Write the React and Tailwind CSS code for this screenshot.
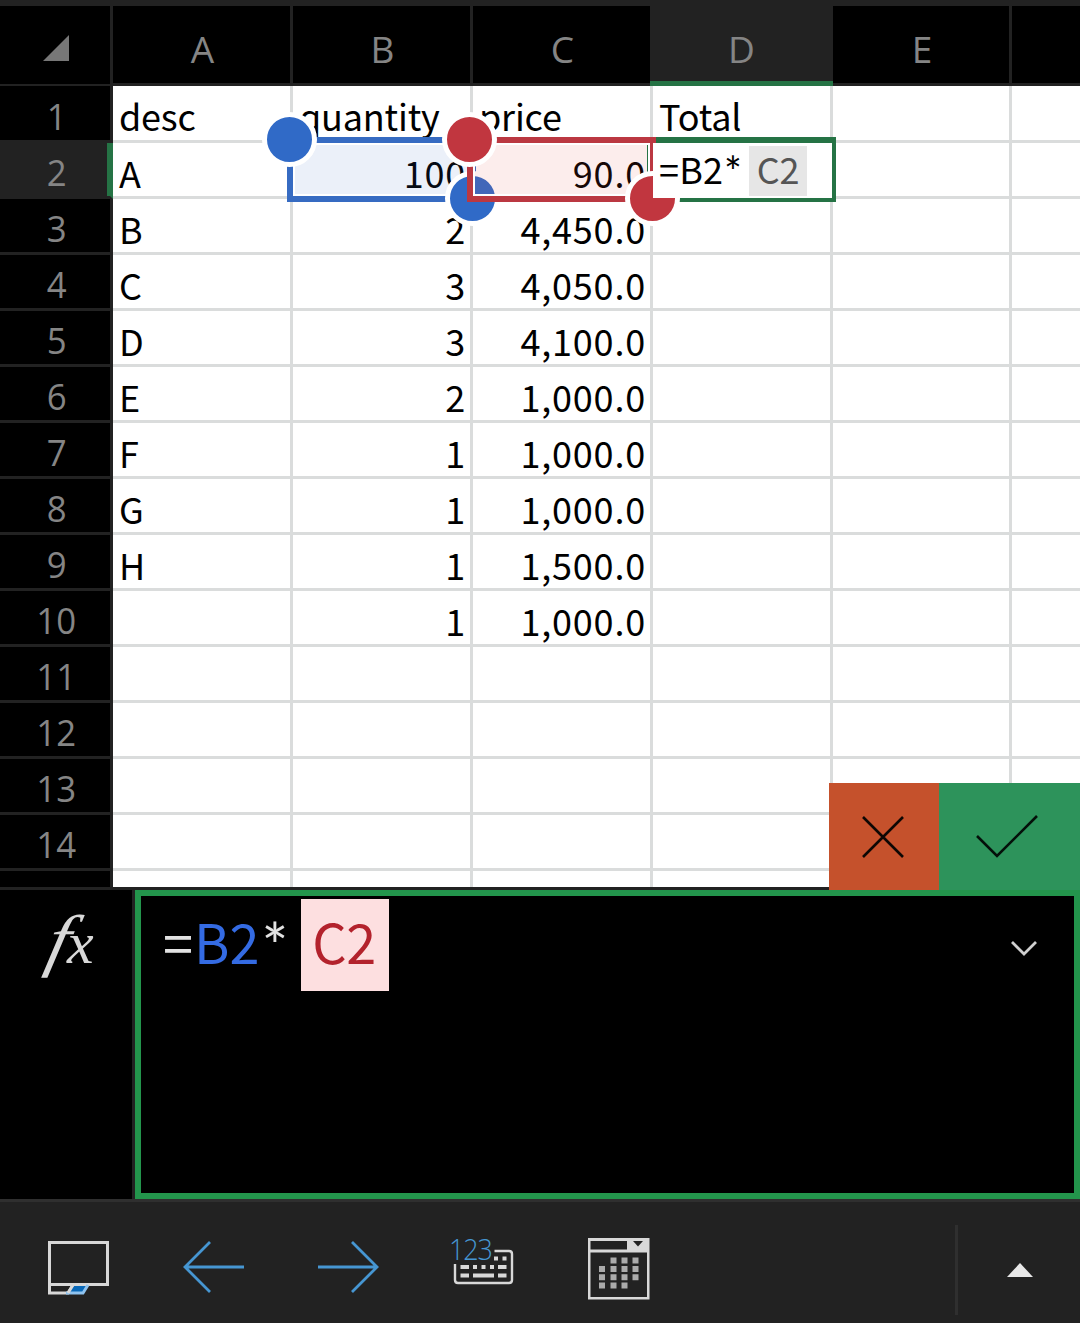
import React from "react";

const cellFont = "font-['Noto_Sans_CJK_SC',sans-serif]";
const uiFont = "font-['Open_Sans',sans-serif]";

const rows = [
  ["desc", "quantity", "price", "Total"],
  ["A", "100", "90.0", ""],
  ["B", "2", "4,450.0", ""],
  ["C", "3", "4,050.0", ""],
  ["D", "3", "4,100.0", ""],
  ["E", "2", "1,000.0", ""],
  ["F", "1", "1,000.0", ""],
  ["G", "1", "1,000.0", ""],
  ["H", "1", "1,500.0", ""],
  ["", "1", "1,000.0", ""],
  ["", "", "", ""],
  ["", "", "", ""],
  ["", "", "", ""],
  ["", "", "", ""],
];

const columns = "grid grid-cols-[113px_180px_180px_180px_180px_179px_71px]";

function ColumnHeader({ label, active }) {
  return (
    <div
      className={
        active
          ? "-ml-[3px] flex h-20 items-center justify-center border-b-[5px] border-[#257345] bg-[#222] pt-[9px]"
          : "flex h-20 items-center justify-center border-r-[3px] border-b-[3px] border-[#222] bg-black pt-[7px] pl-[2px]"
      }
    >
      <span className="inline-block text-[37px] leading-none text-[#858585]">{label}</span>
    </div>
  );
}

function RowHeader({ n, active }) {
  return (
    <div
      className={
        "flex items-center justify-center border-r-[3px] border-b-[3px] border-b-[#222] pt-[4px] pl-[3px] " +
        (active ? "border-r-[#257345] bg-[#222] shadow-[inset_-3px_0_0_#257345]" : "border-r-[#222] bg-black")
      }
    >
      <span className="inline-block scale-x-[0.94] text-[37px] leading-none text-[#858585]">{n}</span>
    </div>
  );
}

function Cell({ value, right }) {
  return (
    <div
      className={
        "flex items-center border-r-[3px] border-b-[3px] border-[#dadcdc] bg-white pl-[6px] pt-[4px] " +
        (right ? "justify-end pr-[4px]" : "justify-start")
      }
    >
      <span
        className={
          "whitespace-nowrap text-[36px] leading-none text-black " +
          (right ? "tracking-[0.8px]" : "tracking-[-0.2px]")
        }
      >
        {value}
      </span>
    </div>
  );
}

function Sheet() {
  return (
    <div className="relative z-10 h-[881px] w-[1080px] bg-white">
      <div className="h-full w-full overflow-hidden">
        <div className={columns + " " + uiFont}>
          <div className="flex h-[81px] items-center justify-end border-r-[3px] border-b-[3px] border-[#222] bg-black pr-[41px] pt-[5px]">
            <svg width="26" height="26" viewBox="0 0 26 26">
              <path d="M26 0V26H0Z" fill="#777" />
            </svg>
          </div>
          <ColumnHeader label="A" />
          <ColumnHeader label="B" />
          <ColumnHeader label="C" />
          <ColumnHeader label="D" active />
          <ColumnHeader label="E" />
          <ColumnHeader label="" />
        </div>
        <div className="-mt-px">
          {rows.map((row, i) => (
            <div key={i} className={columns + (i === 0 ? " h-[57px]" : " h-14")}>
              <div className={"grid " + uiFont}>
                <RowHeader n={i + 1} active={i === 1} />
              </div>
              {row.map((value, c) => (
                <div key={c} className={"grid " + cellFont}>
                  <Cell value={value} right={i > 0 && c > 0} />
                </div>
              ))}
              <Cell value="" />
              <Cell value="" />
            </div>
          ))}
          <div className={columns + " h-4"}>
            <div className="border-r-[3px] border-[#222] bg-black" />
            {[0, 1, 2, 3, 4, 5].map((c) => (
              <div key={c} className="border-r-[3px] border-[#dadcdc] bg-white" />
            ))}
          </div>
        </div>
      </div>

      <Selection />

      <div className="absolute right-0 -bottom-[3px] flex h-[107px]">
        <button className="flex w-[110px] items-center justify-center bg-[#c5512c]">
          <svg width="44" height="44" viewBox="0 0 44 44" className="-ml-[2px]" fill="none" stroke="#0d0704" strokeWidth="2.6">
            <path d="M2 2L42 42M42 2L2 42" />
          </svg>
        </button>
        <button className="flex w-[141px] items-center justify-center bg-[#2d935b]">
          <svg width="64" height="44" viewBox="0 0 64 44" className="-ml-[6px]" fill="none" stroke="#04100a" strokeWidth="2.6">
            <path d="M2 21L22 41L62 1" />
          </svg>
        </button>
      </div>
    </div>
  );
}

function Selection() {
  return (
    <>
      {/* Range B2 */}
      <div className="absolute left-[287px] top-[131px] h-[65px] w-[189px] border-[6px] border-[#366bc2]">
        <div className="size-full border-2 border-white bg-[#366bc2]/10 bg-clip-padding" />
      </div>
      <Handle className="left-[262px] top-[106px] bg-[#306ac7]" />
      <Handle className="left-[445px] top-[165px] bg-[#306ac7]" />

      {/* Active cell outline */}
      <div className="absolute left-[650px] top-[131px] h-[65px] w-[186px] border-t-[6px] border-r-[4px] border-b-[4px] border-[#257345]" />

      {/* Range C2 */}
      <div className="absolute left-[467px] top-[131px] h-[65px] w-[189px] border-[6px] border-[#bb3841]">
        <div className="size-full border-2 border-white bg-[#e65046]/10 bg-clip-padding" />
      </div>
      <div className="absolute left-[647px] top-[139px] h-[50px] w-px bg-[#257345]" />
      <Handle className="left-[442px] top-[106px] bg-[#c1363f]" />
      <Handle className="left-[625px] top-[165px] bg-[#c1363f]" />

      {/* In-cell editor */}
      <div
        className={
          "absolute left-[653px] top-[137px] flex h-[55px] w-[179px] items-start bg-white pl-[6px] pt-[3px] text-[36px] leading-[44px] " +
          cellFont
        }
      >
        <span className="w-[65px] tracking-[0.2px]">=B2</span>
        <span className="w-[18px] text-center font-['Lato',sans-serif] text-[42px] leading-[50px]">*</span>
        <span className="ml-[7px] h-[50px] w-[58px] bg-[#e6e6e6] text-center tracking-[-0.3px] text-[#555]">C2</span>
      </div>
    </>
  );
}

function Handle({ className }) {
  return <div className={"absolute size-[55px] rounded-full border-[5.5px] border-white " + className} />;
}

function FormulaBar() {
  return (
    <div className="flex h-[315px] border-t-[3px] border-b-[3px] border-t-[#222] border-b-[#2f2f2f] bg-black">
      <div className="flex w-[135px] items-baseline border-r-[3px] border-[#222] pl-[50px] pt-[12px] font-['Liberation_Serif',serif] italic leading-[76px] text-[#d8d8d8]">
        <span className="inline-block w-[17px] scale-x-110 -skew-x-12 text-[69px]">f</span>
        <span className="text-[60px]">x</span>
      </div>
      <div className="flex flex-1 items-start justify-between border-[6px] border-[#23954c] pl-[22px] pr-[36px]">
        <div className={"flex pt-[3px] text-[54px] leading-[84px] " + cellFont}>
          <span className="text-[#e2e2e2]">=</span>
          <span className="ml-[1px] w-[67px] text-[#346be3]">B2</span>
          <span className="w-[28px] text-center font-['Lato',sans-serif] text-[63px] leading-[94px] text-[#e2e2e2]">*</span>
          <span className="ml-[12px] h-[92px] w-[88px] bg-[#fddfe0] pr-[2px] text-center tracking-[-0.5px] text-[#b3222c]">C2</span>
        </div>
        <svg width="28" height="18" viewBox="0 0 28 18" className="mt-[43px]" fill="none" stroke="#d0d0d0" strokeWidth="2.8">
          <path d="M2 3L14 15L26 3" />
        </svg>
      </div>
    </div>
  );
}

function Toolbar() {
  return (
    <div className="relative flex h-[121px] bg-[#222]">
      <button className="ml-[46px] mt-[37px] h-[60px] w-[64px]">
        <svg width="64" height="60" viewBox="0 0 64 60" fill="none" stroke="#d8d8d8" strokeWidth="3">
          <path d="M3.500 45V3.500H61.500V45.500H3.500V54H22L27 46" />
          <path d="M28 47H41L36 54H22Z" fill="#0868b8" stroke="none" />
          <path d="M20 54H37L42 46" stroke="#8fc3ef" />
          <path d="M22 54L27 46" />
        </svg>
      </button>
      <button className="ml-[72px] mt-[37px] h-[56px] w-[64px]">
        <svg width="64" height="56" viewBox="0 0 64 56" fill="none" stroke="#4696d2" strokeWidth="2.8">
          <path d="M62 28H3M28 3L3 28L28 53" />
        </svg>
      </button>
      <button className="ml-[70px] mt-[37px] h-[56px] w-[64px]">
        <svg width="64" height="56" viewBox="0 0 64 56" fill="none" stroke="#4696d2" strokeWidth="2.8">
          <path d="M2 28H61M36 3L61 28L36 53" />
        </svg>
      </button>
      <button className="relative ml-[70px] mt-[36px] h-[50px] w-[66px]">
        <svg width="66" height="50" viewBox="0 0 66 50" fill="none" stroke="#d8d8d8" strokeWidth="2.4">
          <path d="M44.500 13H59Q62 13 62 16V42Q62 45 59 45H8Q5 45 5 42V26" />
          <path
            fill="#d8d8d8"
            stroke="none"
            d="M44 18.500h4v4h-4zM52.500 18.500h4v4h-4zM10.500 27h8.500v4h-8.500zM23 27h4v4h-4zM31.500 27h4v4h-4zM40 27h4v4h-4zM48 27h8.500v4h-8.500zM10.500 35.500h8.500v4h-8.500zM23 35.500h21v4h-21zM48 35.500h8.500v4h-8.500z"
          />
        </svg>
        <span className="absolute -left-px -top-[4px] origin-left scale-x-[0.93] font-['Open_Sans',sans-serif] text-[29px] font-light leading-[30px] tracking-[-1.2px] text-[#4696d2]">
          123
        </span>
      </button>
      <button className="ml-[70px] mt-[35px] h-[64px] w-[64px]">
        <svg width="64" height="64" viewBox="0 0 64 64">
          <path fill="#d8d8d8" fillRule="evenodd" d="M2 1H63.500V62.500H2ZM4.500 4V12.500H41V4ZM4.500 15.500V60H61V15.500Z" />
          <path d="M47 4H57L52 9.500Z" fill="#222" />
          <path
            fill="#aaa"
            d="M24.500 20.500h6v6h-6zM35.500 20.500h6v6h-6zM46.500 20.500h6v6h-6zM13 29h6v6h-6zM24.500 29h6v6h-6zM35.500 29h6v6h-6zM46.500 29h6v6h-6zM13 37.200h6v6h-6zM24.500 37.200h6v6h-6zM35.500 37.200h6v6h-6zM46.500 37.200h6v6h-6zM13 45.500h6v6h-6zM24.500 45.500h6v6h-6zM35.500 45.500h6v6h-6z"
          />
        </svg>
      </button>
      <div className="mt-[23px] ml-auto h-[90px] w-[3px] bg-[#2f2f2f]" />
      <button className="flex w-[122px] justify-center pt-[61px] pl-[2px]">
        <svg width="26" height="14" viewBox="0 0 26 14">
          <path d="M13 0L26 14H0Z" fill="#e8e8e8" />
        </svg>
      </button>
    </div>
  );
}

export default function App() {
  return (
    <div className="h-[1323px] w-[1080px] overflow-hidden bg-[#222]">
      <div className="h-[6px] bg-[#222]" />
      <Sheet />
      <FormulaBar />
      <Toolbar />
    </div>
  );
}
